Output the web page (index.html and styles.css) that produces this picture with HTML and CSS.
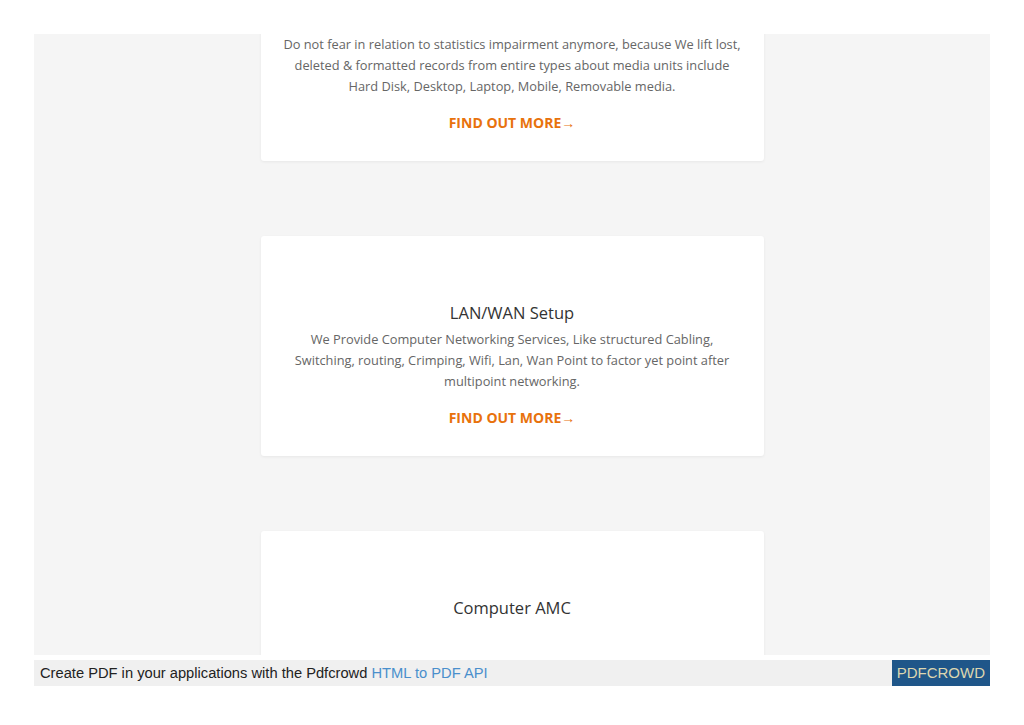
FILE: index.html
```html
<!DOCTYPE html>
<html lang="en">
<head>
    <meta charset="UTF-8">
    <meta name="viewport" content="width=device-width, initial-scale=1.0">
    <title>Services</title>
    <link rel="stylesheet" href="styles.css">
</head>
<body>
    <div class="page">
        <div class="services">
            <div class="service-card">
                <h3>Data Recovery</h3>
                <p>Do not fear in relation to statistics impairment anymore, because We lift lost, deleted &amp; formatted records from entire types about media units include Hard Disk, Desktop, Laptop, Mobile, Removable media.</p>
                <a href="#" class="more">FIND OUT MORE&rarr;</a>
            </div>
            <div class="service-card">
                <h3>LAN/WAN Setup</h3>
                <p>We Provide Computer Networking Services, Like structured Cabling, Switching, routing, Crimping, Wifi, Lan, Wan Point to factor yet point after multipoint networking.</p>
                <a href="#" class="more">FIND OUT MORE&rarr;</a>
            </div>
            <div class="service-card service-card--tall">
                <h3>Computer AMC</h3>
                <p>We offer annual maintenance contracts for desktops, laptops, printers and networks, with regular visits and quick support.</p>
                <a href="#" class="more">FIND OUT MORE&rarr;</a>
            </div>
        </div>
    </div>

    <div class="pdf-footer">
        <span class="pdf-text">Create PDF in your applications with the Pdfcrowd <a href="#">HTML to PDF API</a></span>
        <span class="pdf-brand">PDFCROWD</span>
    </div>
</body>
</html>
```

FILE: styles.css
```css
body {
    margin: 0;
    background: #fff;
    font-family: "Open Sans", sans-serif;
}
.page {
    margin: 34px 34px 0 34px;
    height: 621px;
    background-color: #f5f5f5;
    overflow: hidden;
}
.services {
    width: 503px;
    margin: -93px auto 0 auto;
    display: flex;
    flex-direction: column;
    gap: 75px;
}
.service-card {
    background: #fff;
    min-height: 220px;
    box-sizing: border-box;
    padding: 66px 19px 28px 19px;
    text-align: center;
    border-radius: 3px;
    box-shadow: 0 1px 3px rgba(0, 0, 0, 0.06);
}
.service-card h3 {
    margin: 0 0 5px 0;
    font-size: 16.5px;
    line-height: 22px;
    font-weight: 400;
    color: #333;
}
.service-card p {
    margin: 0;
    font-size: 12.8px;
    line-height: 21px;
    color: #666;
}
.service-card--tall p {
    margin-top: 32px;
}
.more {
    display: inline-block;
    margin-top: 16px;
    font-size: 14px;
    line-height: 20px;
    font-weight: 700;
    color: #e8720c;
    text-decoration: none;
}
.pdf-footer {
    margin: 5px 34px 0 34px;
    height: 26px;
    background: #f0f0f0;
    display: flex;
    align-items: center;
    justify-content: space-between;
    font-family: "Liberation Sans", Arial, sans-serif;
    font-size: 15px;
    color: #222;
}
.pdf-text {
    padding-left: 6px;
    font-size: 14.7px;
    margin-top: -1px;
}
.pdf-footer a {
    color: #4a8fcc;
    text-decoration: none;
}
.pdf-brand {
    height: 26px;
    line-height: 26px;
    padding: 0 5px;
    background: #1f5689;
    color: #ddd6b0;
}
```
